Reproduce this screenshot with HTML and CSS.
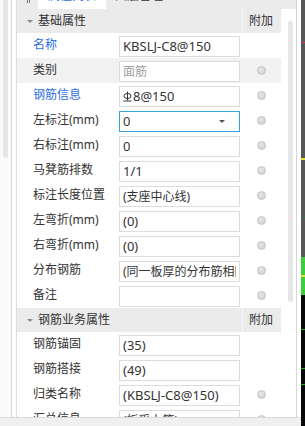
FILE: index.html
```html
<!DOCTYPE html>
<html>

	<head>
		<meta charset="UTF-8">
		<title>属性列表</title>
		<link rel="stylesheet" href="styles.css">
	</head>

	<body>
		<div id="app">
			<div class="work">
				<div class="top">
					<div class="dock">
						<div class="dock-thumb"></div>
					</div>
					<div class="panel">
						<div class="tabs">
							<div class="tab-grip"><i></i><i></i></div>
							<div class="tab tab-on"><span>属性列表</span></div>
							<div class="tab"><span>图层管理</span></div>
						</div>
						<div class="body">
							<div class="grid">
								<!-- 基础属性 -->
								<div class="grp">
									<div class="grp-name"><b class="caret"></b>基础属性</div>
									<div class="grp-add">附加</div>
								</div>
								<div class="row">
									<div class="lbl blue">名称</div>
									<div class="val"><div class="box"><span class="txt en">KBSLJ-C8@150</span></div></div>
									<div class="add"></div>
								</div>
								<div class="row hl">
									<div class="lbl">类别</div>
									<div class="val"><div class="box off"><span class="txt">面筋</span></div></div>
									<div class="add"><i class="dot"></i></div>
								</div>
								<div class="row">
									<div class="lbl blue">钢筋信息</div>
									<div class="val">
										<div class="box">
											<svg class="sym" width="9" height="11" viewBox="0 0 9 11">
												<path d="M4.5 0.5V9.5M0.5 10H8.5" stroke="#333" stroke-width="1" fill="none"/>
												<ellipse cx="4.5" cy="5" rx="3.5" ry="2.6" stroke="#333" stroke-width="1" fill="none"/>
											</svg>
											<span class="txt en">8@150</span>
										</div>
									</div>
									<div class="add"><i class="dot"></i></div>
								</div>
								<div class="row">
									<div class="lbl">左标注(mm)</div>
									<div class="val"><div class="box sel"><span class="txt en">0</span><b class="drop"></b></div></div>
									<div class="add"><i class="dot"></i></div>
								</div>
								<div class="row">
									<div class="lbl">右标注(mm)</div>
									<div class="val"><div class="box"><span class="txt en">0</span></div></div>
									<div class="add"><i class="dot"></i></div>
								</div>
								<div class="row">
									<div class="lbl">马凳筋排数</div>
									<div class="val"><div class="box"><span class="txt en">1/1</span></div></div>
									<div class="add"><i class="dot"></i></div>
								</div>
								<div class="row">
									<div class="lbl">标注长度位置</div>
									<div class="val"><div class="box"><span class="txt">(支座中心线)</span></div></div>
									<div class="add"><i class="dot"></i></div>
								</div>
								<div class="row">
									<div class="lbl">左弯折(mm)</div>
									<div class="val"><div class="box"><span class="txt en">(0)</span></div></div>
									<div class="add"><i class="dot"></i></div>
								</div>
								<div class="row">
									<div class="lbl">右弯折(mm)</div>
									<div class="val"><div class="box"><span class="txt en">(0)</span></div></div>
									<div class="add"><i class="dot"></i></div>
								</div>
								<div class="row">
									<div class="lbl">分布钢筋</div>
									<div class="val"><div class="box"><span class="txt">(同一板厚的分布筋相同)</span></div></div>
									<div class="add"><i class="dot"></i></div>
								</div>
								<div class="row">
									<div class="lbl">备注</div>
									<div class="val"><div class="box"></div></div>
									<div class="add"><i class="dot"></i></div>
								</div>
								<!-- 钢筋业务属性 -->
								<div class="grp">
									<div class="grp-name"><b class="caret"></b>钢筋业务属性</div>
									<div class="grp-add">附加</div>
								</div>
								<div class="row">
									<div class="lbl">钢筋锚固</div>
									<div class="val"><div class="box"><span class="txt en">(35)</span></div></div>
									<div class="add"></div>
								</div>
								<div class="row">
									<div class="lbl">钢筋搭接</div>
									<div class="val"><div class="box"><span class="txt en">(49)</span></div></div>
									<div class="add"></div>
								</div>
								<div class="row">
									<div class="lbl">归类名称</div>
									<div class="val"><div class="box"><span class="txt en">(KBSLJ-C8@150)</span></div></div>
									<div class="add"><i class="dot"></i></div>
								</div>
								<div class="row">
									<div class="lbl">汇总信息</div>
									<div class="val"><div class="box"><span class="txt">(板受力筋)</span></div></div>
									<div class="add"><i class="dot"></i></div>
								</div>
							</div>
							<div class="scroll">
								<div class="scroll-thumb"></div>
							</div>
						</div>
					</div>
					<div class="gap"></div>
				</div>
				<div class="foot"></div>
			</div>
			<div class="canvas"></div>
		</div>
	</body>

</html>
```

FILE: styles.css
```css
html,
body {
	margin: 0;
	padding: 0;
}

body {
	font-family: "Noto Sans", "Noto Sans CJK SC", sans-serif;
	font-size: 12px;
	color: #333;
	background-color: #fff;
}

#app {
	display: flex;
	width: 305px;
	height: 426px;
	overflow: hidden;
}

.work {
	width: 301px;
	display: flex;
	flex-direction: column;
}

.top {
	height: 417px;
	display: flex;
}

.foot {
	flex: 1;
	background-color: #f0f0f0;
	border-top: 1px solid #d9d9d9;
}

/* 左侧停靠条 */
.dock {
	width: 11px;
	border-right: 1px solid #d6d6d6;
	background-color: #fafafa;
}

.dock-thumb {
	width: 5px;
	height: 158px;
	margin-left: 3px;
	background-color: #e6e6e6;
	border-radius: 0 0 2px 2px;
}

.panel {
	width: 279px;
	margin-left: 4px;
	border-left: 1px solid #dedede;
	border-right: 1px solid #d6d6d6;
	display: flex;
	flex-direction: column;
}

.gap {
	width: 4px;
}

/* 标签页 */
.tabs {
	height: 9px;
	display: flex;
	background-color: #ebebeb;
	overflow: hidden;
}

.tab-grip {
	width: 21px;
	display: flex;
	gap: 1px;
	padding-left: 10px;
	box-sizing: border-box;
}

.tab-grip i {
	width: 1px;
	height: 3px;
	background-color: #777;
}

.tab {
	padding-left: 9px;
	line-height: 12px;
}

.tab span {
	display: block;
	margin-top: -10px;
}

.tab-on {
	width: 68px;
	box-sizing: border-box;
	padding-left: 10px;
	background-color: #fff;
	color: #2b6fdf;
}

.body {
	flex: 1;
	display: flex;
	overflow: hidden;
}

.grid {
	width: 264px;
	overflow: hidden;
}

.scroll {
	width: 15px;
}

.scroll-thumb {
	width: 5px;
	height: 281px;
	margin: 12px 0 0 7px;
	background-color: #e6e6e6;
	border-radius: 3px;
}

/* 分组标题 */
.grp {
	display: grid;
	grid-template-columns: 1fr 39px;
	height: 24px;
	line-height: 24px;
	background-color: #ebebeb;
}

.grp-name {
	display: flex;
	align-items: center;
	padding-left: 10px;
}

.caret {
	width: 0;
	height: 0;
	border-left: 3px solid transparent;
	border-right: 3px solid transparent;
	border-top: 3px solid #8c8c8c;
	margin-right: 5px;
}

.grp-add {
	border-left: 1px solid #f8f8f8;
	padding-left: 6px;
}

/* 属性行 */
.row {
	display: grid;
	grid-template-columns: 102px 123px 39px;
	height: 24px;
	border-bottom: 1px solid transparent;
}

.row.hl {
	background-color: #f2f2f2;
}

.lbl {
	padding-left: 16px;
	line-height: 24px;
	white-space: nowrap;
}

.blue {
	color: #2b6fdf;
}

.val {
	padding-top: 3px;
}

.box {
	width: 121px;
	height: 21px;
	box-sizing: border-box;
	border: 1px solid #dcdcdc;
	background-color: #fff;
	padding: 0 3px;
	display: flex;
	align-items: center;
	line-height: 19px;
	overflow: hidden;
}

.box.sel {
	border-color: #3ba3dc;
}

.box.off {
	color: #a0a0a0;
}

.txt {
	white-space: nowrap;
	overflow: hidden;
	min-width: 0;
}

.en {
	font-size: 13px;
}

.sym {
	flex: none;
	margin-right: 1px;
}

.drop {
	width: 0;
	height: 0;
	margin-left: auto;
	margin-right: 11px;
	border-left: 3px solid transparent;
	border-right: 3px solid transparent;
	border-top: 3px solid #555;
}

.add {
	display: flex;
	align-items: center;
	justify-content: center;
}

.dot {
	width: 9px;
	height: 9px;
	box-sizing: border-box;
	border-radius: 50%;
	border: 1px solid #c4c4c4;
	background: radial-gradient(circle at 40% 35%, #e6e6e6, #cdcdcd);
}

/* 右侧绘图区 */
.canvas {
	flex: 1;
	background: linear-gradient(to bottom,
		#585858 0, #585858 42px, #d83a3a 42px, #d83a3a 43px,
		#585858 43px, #585858 158px, #e8e03a 158px, #e8e03a 160px,
		#585858 160px, #585858 217px, #2f7f2f 217px, #2f7f2f 218px,
		#585858 218px, #585858 257px, #3ccf3c 257px, #3ccf3c 275px,
		#e8e03a 275px, #e8e03a 277px, #3ccf3c 277px, #3ccf3c 295px,
		#080808 295px, #080808 329px, #27a827 329px, #27a827 330px,
		#080808 330px, #080808 368px, #27a827 368px, #27a827 369px,
		#080808 369px, #080808 384px, #27a827 384px, #27a827 385px,
		#080808 385px);
}
```
